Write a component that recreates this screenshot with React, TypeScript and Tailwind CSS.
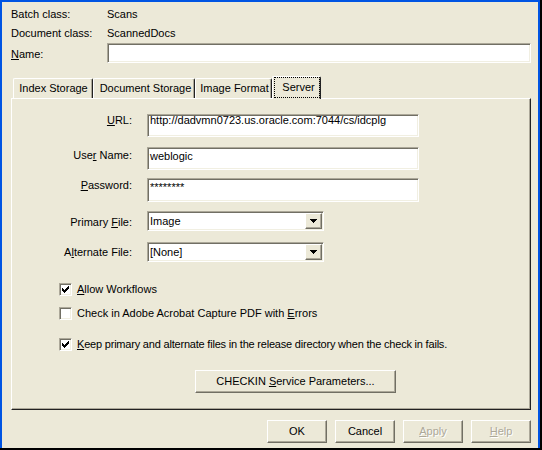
import React from "react";

const SUNKEN =
  "border border-t-[#aca899] border-l-[#aca899] border-r-white border-b-white shadow-[inset_1px_1px_0_#716f64,inset_-1px_-1px_0_#f1efe2]";
const RAISED =
  "border border-t-white border-l-white border-r-[#716f64] border-b-[#716f64] shadow-[inset_-1px_-1px_0_#aca899]";

function U({ children }: { children: React.ReactNode }) {
  return <span className="underline">{children}</span>;
}

function CheckMark() {
  return (
    <svg width="7" height="7" viewBox="0 0 7 7" shapeRendering="crispEdges">
      <rect x="6" y="0" width="1" height="1" fill="#000" />
      <rect x="5" y="1" width="2" height="1" fill="#000" />
      <rect x="0" y="2" width="1" height="1" fill="#000" />
      <rect x="4" y="2" width="3" height="1" fill="#000" />
      <rect x="0" y="3" width="2" height="1" fill="#000" />
      <rect x="3" y="3" width="3" height="1" fill="#000" />
      <rect x="0" y="4" width="5" height="1" fill="#000" />
      <rect x="1" y="5" width="3" height="1" fill="#000" />
      <rect x="2" y="6" width="1" height="1" fill="#000" />
    </svg>
  );
}

function CheckBox({ checked }: { checked: boolean }) {
  return (
    <div className={`w-[13px] h-[13px] shrink-0 bg-white ${SUNKEN} flex items-center justify-center`}>
      {checked ? <CheckMark /> : null}
    </div>
  );
}

function Arrow() {
  return (
    <svg width="7" height="4" viewBox="0 0 7 4" shapeRendering="crispEdges">
      <rect x="0" y="0" width="7" height="1" fill="#000" />
      <rect x="1" y="1" width="5" height="1" fill="#000" />
      <rect x="2" y="2" width="3" height="1" fill="#000" />
      <rect x="3" y="3" width="1" height="1" fill="#000" />
    </svg>
  );
}

function Select({ value }: { value: string }) {
  return (
    <div className={`ml-[15px] w-[177px] h-[20px] bg-white ${SUNKEN} flex items-stretch`}>
      <div className="flex-1 pl-[2px] flex items-center">{value}</div>
      <div className={`w-[17px] my-[1px] mr-[1px] bg-[#ece9d8] ${RAISED} flex items-center justify-center`}>
        <Arrow />
      </div>
    </div>
  );
}

export default function App() {
  return (
    <div className="w-[542px] h-[450px] bg-black overflow-hidden font-['Liberation_Sans',Arial,sans-serif] text-[11px] leading-[13px] text-black">
      <div className="w-[540px] h-[448px] border-t-2 border-l-2 border-r-2 border-t-[#0054e3] border-l-[#0054e3] border-r-[#0054e3] bg-[#ece9d8] pl-[9px] pr-[7px] flex flex-col">
        {/* header rows */}
        <div className="flex mt-[6px] h-[13px]">
          <div className="w-[96px]">Batch class:</div>
          <div>Scans</div>
        </div>
        <div className="flex mt-[6px] h-[13px]">
          <div className="w-[96px]">Document class:</div>
          <div>ScannedDocs</div>
        </div>
        <div className="flex mt-[3px] h-[20px]">
          <div className="w-[96px] pt-[5px]">
            <U>N</U>ame:
          </div>
          <div className={`flex-1 h-[20px] bg-white ${SUNKEN}`}></div>
        </div>

        {/* tabs */}
        <div className="mt-[13px] h-[22px] flex items-end pl-[2px] relative z-10">
          <div className="w-[80px] h-[20px] border-t border-l border-r border-t-white border-l-white border-r-[#222] shadow-[inset_-1px_0_0_#aca899] rounded-tl-[2px] rounded-tr-[2px] flex justify-center pt-[3px] pl-[1px]">
            Index Storage
          </div>
          <div className="w-[102px] h-[20px] border-t border-l border-r border-t-white border-l-white border-r-[#222] shadow-[inset_-1px_0_0_#aca899] rounded-tl-[2px] rounded-tr-[2px] flex justify-center pt-[3px] pl-[3px]">
            Document Storage
          </div>
          <div className="w-[77px] h-[20px] border-t border-l border-r border-t-white border-l-white border-r-[#222] shadow-[inset_-1px_0_0_#aca899] rounded-tl-[2px] rounded-tr-[2px] flex justify-center pt-[3px] pl-[2px]">
            Image Format
          </div>
          <div className="w-[49px] h-[23px] mb-[-1px] bg-[#ece9d8] border-t border-l border-r border-t-white border-l-white border-r-[#222] shadow-[inset_-1px_0_0_#aca899] rounded-tl-[2px] rounded-tr-[2px] flex pl-[1px] pb-[1px]">
            <div className="flex-1 border border-dotted border-black flex justify-center items-center pl-[3px]">
              Server
            </div>
          </div>
        </div>

        {/* panel */}
        <div className="h-[312px] border border-t-white border-l-white border-r-[#222] border-b-[#222] shadow-[inset_-1px_-1px_0_#aca899] flex flex-col">
          <div className="flex mt-[15px]">
            <div className="w-[120px] text-right">
              <U>U</U>RL:
            </div>
            <div className={`ml-[15px] w-[272px] h-[23px] bg-white ${SUNKEN} pl-[2px] leading-[11px]`}>
              http://dadvmn0723.us.oracle.com:7044/cs/idcplg
            </div>
          </div>
          <div className="flex mt-[10px]">
            <div className="w-[120px] text-right pt-[2px]">
              Use<U>r</U> Name:
            </div>
            <div className={`ml-[15px] w-[272px] h-[23px] bg-white ${SUNKEN} pl-[2px] pt-[2px]`}>
              weblogic
            </div>
          </div>
          <div className="flex mt-[8px]">
            <div className="w-[120px] text-right pt-[1px]">
              <U>P</U>assword:
            </div>
            <div className={`ml-[15px] w-[272px] h-[24px] bg-white ${SUNKEN} pl-[2px] pt-[2px]`}>
              ********
            </div>
          </div>
          <div className="flex mt-[9px]">
            <div className="w-[120px] text-right pt-[5px]">
              Primary <U>F</U>ile:
            </div>
            <Select value="Image" />
          </div>
          <div className="flex mt-[11px]">
            <div className="w-[120px] text-right pt-[4px]">
              A<U>l</U>ternate File:
            </div>
            <Select value="[None]" />
          </div>

          <div className="flex items-center gap-[5px] pl-[47px] mt-[21px] h-[13px]">
            <CheckBox checked />
            <div>
              <U>A</U>llow Workflows
            </div>
          </div>
          <div className="flex items-center gap-[5px] pl-[47px] mt-[11px] h-[13px]">
            <CheckBox checked={false} />
            <div>
              Check in Adobe Acrobat Capture PDF with <U>E</U>rrors
            </div>
          </div>
          <div className="flex items-center gap-[5px] pl-[47px] mt-[18px] h-[13px]">
            <CheckBox checked />
            <div className="tracking-[-0.2px]">
              <U>K</U>eep primary and alternate files in the release directory when the check in fails.
            </div>
          </div>

          <div className="flex pl-[183px] mt-[19px]">
            <div className={`w-[201px] h-[23px] ${RAISED} flex items-center justify-center`}>
              <span>
                CHECKIN <U>S</U>ervice Parameters...
              </span>
            </div>
          </div>
        </div>

        {/* bottom buttons */}
        <div className="mt-[10px] flex justify-end gap-[8px]">
          <div className={`w-[60px] h-[23px] ${RAISED} flex items-center justify-center`}>OK</div>
          <div className={`w-[60px] h-[23px] ${RAISED} flex items-center justify-center`}>Cancel</div>
          <div className={`w-[60px] h-[23px] ${RAISED} flex items-center justify-center text-[#aca899] [text-shadow:1px_1px_0_#ffffff]`}>
            <span>
              <U>A</U>pply
            </span>
          </div>
          <div className={`w-[60px] h-[23px] ${RAISED} flex items-center justify-center text-[#aca899] [text-shadow:1px_1px_0_#ffffff]`}>
            <span>
              <U>H</U>elp
            </span>
          </div>
        </div>
      </div>
    </div>
  );
}
